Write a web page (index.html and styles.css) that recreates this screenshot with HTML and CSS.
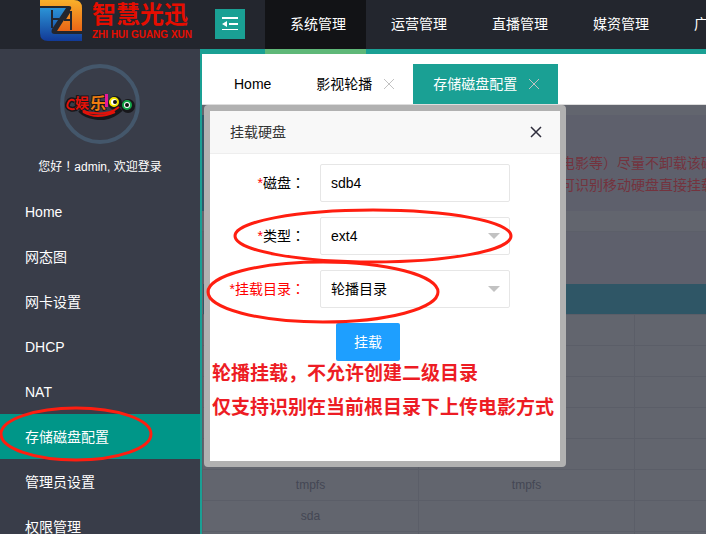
FILE: index.html
```
<!DOCTYPE html>
<html lang="zh-CN">
<head>
  <meta charset="UTF-8">
  <meta name="viewport" content="width=device-width, initial-scale=1.0">
  <title>存储磁盘配置</title>
  <link rel="stylesheet" href="styles.css">
</head>
<body>
  <header class="header">
    <a href="#" class="logo">
      <svg class="logo-mark" width="42" height="42" viewBox="0 0 42 42" aria-hidden="true">
        <defs>
          <linearGradient id="blue" x1="0" y1="0" x2="0" y2="1">
            <stop offset="0" stop-color="#2b93d6"/>
            <stop offset="1" stop-color="#123a97"/>
          </linearGradient>
          <linearGradient id="orange" x1="0" y1="0" x2="0" y2="1">
            <stop offset="0" stop-color="#f9b02a"/>
            <stop offset="1" stop-color="#ea6516"/>
          </linearGradient>
        </defs>
        <path fill="url(#blue)" d="M0 8H26L12 29q-2 5 3 5H42V41H8q-8 0-8-8z"/>
        <path fill="url(#orange)" d="M0 0H34q8 0 8 8V31H17L31 9q1-3-2-3H0z"/>
        <path fill="none" stroke="#23262e" stroke-width="2" d="M12 10V28M12 19H19M31 11V30M24 20H31M30 11L25 19"/>
      </svg>
      <span class="logo-text">
        <b>智慧光迅</b>
        <small>ZHI HUI GUANG XUN</small>
      </span>
    </a>
    <button class="fold" type="button" aria-label="收起菜单">
      <svg width="16" height="14" viewBox="0 0 16 14" aria-hidden="true">
        <path fill="#fff" d="M0 0H16V2H0zM7 6H16V8H7zM0 12H16V13H0zM0 7L5 4V10z"/>
      </svg>
    </button>
    <nav class="top-nav">
      <a href="#" class="active">系统管理</a>
      <a href="#">运营管理</a>
      <a href="#">直播管理</a>
      <a href="#">媒资管理</a>
      <a href="#">广告管理</a>
    </nav>
  </header>

  <div class="layout">
    <aside class="side">
      <div class="user">
        <div class="avatar">
          <svg width="70" height="32" viewBox="0 0 70 32" aria-hidden="true">
            <path fill="none" stroke="#17171b" stroke-width="5" d="M10 13q-5-3-7 2t3 6q4 1 7-3M15 22q6 6 15 7q14 3 26-8"/>
            <circle cx="50" cy="15" r="7" fill="#17171b"/>
            <circle cx="63" cy="18" r="7" fill="#17171b"/>
            <path fill="none" stroke="#e31209" stroke-width="2" d="M10 13q-5-3-7 2t3 6q4 1 7-3M14 20q6 5 15 5q15 2 25-6M18 24q14 8 32 0"/>
            <text class="yu" x="10" y="20">娱</text>
            <text class="le" x="25" y="21">乐</text>
            <rect x="40" y="6" width="3" height="13" fill="#e5189a"/>
            <circle cx="49" cy="14" r="4" fill="#fff" stroke="#f3e400" stroke-width="2"/>
            <circle cx="50" cy="14" r="2" fill="#111"/>
            <circle cx="62" cy="17" r="4" fill="#fff" stroke="#12a548" stroke-width="2"/>
            <circle cx="62" cy="17" r="2" fill="#111"/>
          </svg>
        </div>
        <p>您好<span lang="zh-TW">！</span>admin, 欢迎登录</p>
      </div>
      <nav class="side-nav">
        <a href="#">Home</a>
        <a href="#">网态图</a>
        <a href="#">网卡设置</a>
        <a href="#">DHCP</a>
        <a href="#">NAT</a>
        <a href="#" class="active">存储磁盘配置
          <svg class="mark mark-side" viewBox="0 0 156 56" aria-hidden="true"><ellipse cx="76" cy="28" rx="75" ry="26"/></svg>
        </a>
        <a href="#">管理员设置</a>
        <a href="#">权限管理</a>
      </nav>
    </aside>

    <main class="main">
      <div class="tabs">
        <a href="#" class="tab">Home</a>
        <a href="#" class="tab">影视轮播
          <svg width="10" height="10" viewBox="0 0 10 10" aria-hidden="true"><path d="M0 0L10 10M10 0L0 10"/></svg>
        </a>
        <a href="#" class="tab active">存储磁盘配置
          <svg width="10" height="10" viewBox="0 0 10 10" aria-hidden="true"><path d="M0 0L10 10M10 0L0 10"/></svg>
        </a>
      </div>

      <div class="page">
        <div class="notice">
          <p>电影等<span lang="zh-TW">）</span>尽量不卸载该磁盘</p>
          <p>可识别移动硬盘直接挂载</p>
        </div>
        <div class="toolbar"></div>
        <table class="disks">
          <thead>
            <tr><th></th><th></th><th></th></tr>
          </thead>
          <tbody>
            <tr><td></td><td></td><td></td></tr>
            <tr><td></td><td></td><td></td></tr>
            <tr><td></td><td></td><td></td></tr>
            <tr><td></td><td></td><td></td></tr>
            <tr><td></td><td></td><td></td></tr>
            <tr><td>tmpfs</td><td>tmpfs</td><td></td></tr>
            <tr><td>sda</td><td></td><td></td></tr>
            <tr><td></td><td></td><td></td></tr>
          </tbody>
        </table>
      </div>

      <section class="dialog" role="dialog" aria-labelledby="dialog-title">
        <div class="dialog-head">
          <h2 id="dialog-title">挂载硬盘</h2>
          <button type="button" aria-label="关闭">
            <svg width="12" height="12" viewBox="0 0 12 12" aria-hidden="true"><path d="M1 1L11 11M11 1L1 11"/></svg>
          </button>
        </div>
        <form class="dialog-body">
          <div class="field">
            <label for="disk"><i>*</i>磁盘<span lang="zh-TW">：</span></label>
            <input id="disk" type="text" value="sdb4">
          </div>
          <div class="field">
            <label for="type"><i>*</i>类型<span lang="zh-TW">：</span></label>
            <select id="type"><option>ext4</option></select>
            <svg class="mark mark-type" viewBox="0 0 280 58" aria-hidden="true"><ellipse cx="140" cy="29" rx="138" ry="26"/></svg>
          </div>
          <div class="field">
            <label for="dir" class="warn"><i>*</i>挂载目录<span lang="zh-TW">：</span></label>
            <select id="dir"><option>轮播目录</option></select>
            <svg class="mark mark-dir" viewBox="0 0 234 64" aria-hidden="true"><ellipse cx="117" cy="32" rx="115" ry="30"/></svg>
          </div>
          <button class="submit" type="button">挂载</button>
          <p class="tip">轮播挂载，不允许创建二级目录<br>仅支持识别在当前根目录下上传电影方式</p>
        </form>
      </section>
    </main>
  </div>
</body>
</html>
```
FILE: styles.css
```
* {
  box-sizing: border-box;
}

body {
  margin: 0;
  height: 100vh;
  display: flex;
  flex-direction: column;
  overflow: hidden;
  font: 14px/20px "Liberation Sans", "Noto Sans CJK SC", sans-serif;
  color: #000;
}

a {
  color: inherit;
  text-decoration: none;
}

p,
h2 {
  margin: 0;
}

button,
input,
select {
  font: inherit;
}

/* full-width punctuation centred in its cell */
[lang="zh-TW"] {
  font-family: "Noto Sans CJK TC", sans-serif;
  line-height: 1;
}

/* header */
.header {
  flex: none;
  display: flex;
  height: 49px;
  overflow-x: clip;
  background: #23262e;
  color: #fff;
}

.logo {
  flex: none;
  display: flex;
  width: 215px;
  padding-left: 40px;
  color: #e60d00;
}

.logo-text {
  margin-left: 10px;
  white-space: nowrap;
}

.logo-text b {
  display: block;
  font-size: 24px;
  line-height: 30px;
}

.logo-text small {
  display: block;
  font: bold 10px/10px "Liberation Sans", sans-serif;
}

.fold {
  flex: none;
  display: flex;
  align-items: center;
  justify-content: center;
  width: 30px;
  height: 30px;
  margin-top: 9px;
  padding: 0;
  border: 0;
  background: #1aa094;
}

.top-nav {
  display: flex;
  margin-left: 20px;
  white-space: nowrap;
}

.top-nav a {
  position: relative;
  padding: 0 25px;
  width: 101px;
  line-height: 49px;
}

.top-nav .active {
  background: #121316;
}

.top-nav .active::after {
  content: "";
  position: absolute;
  left: 0;
  top: 100%;
  z-index: 2;
  width: 100%;
  height: 5px;
  background: #5fb878;
}

/* sidebar */
.layout {
  flex: 1;
  display: flex;
  min-height: 0;
}

.side {
  flex: none;
  width: 200px;
  background: #393d49;
  color: #fff;
}

.user {
  padding: 15px 0 12px;
  font-size: 12px;
  text-align: center;
}

.avatar {
  display: flex;
  align-items: center;
  justify-content: center;
  width: 80px;
  height: 80px;
  margin: 0 auto 13px;
  border: 4px solid #44576b;
  border-radius: 50%;
}

.avatar svg {
  flex: none;
}

.avatar text {
  font-weight: bold;
  paint-order: stroke;
  stroke: #17171b;
  stroke-width: 2px;
}

.yu {
  font-size: 14px;
  fill: #e31209;
}

.le {
  font-size: 16px;
  fill: #f07d10;
}

.side-nav a {
  position: relative;
  display: block;
  height: 45px;
  padding-left: 25px;
  line-height: 46px;
}

.side-nav .active {
  background: #009688;
}

/* tabs */
.main {
  position: relative;
  flex: 1;
  display: flex;
  flex-direction: column;
  min-width: 0;
  border-top: 5px solid #1aa094;
  border-left: 2px solid #1aa094;
}

.tabs {
  flex: none;
  display: flex;
  padding: 10px 12px 0;
  border-bottom: 1px solid #ddd;
}

.tab {
  display: flex;
  align-items: center;
  gap: 12px;
  padding: 0 19px 0 20px;
  margin-right: 6px;
  line-height: 40px;
}

.tab svg {
  fill: none;
  stroke: #c2c2c2;
}

.tab.active {
  margin-left: -6px;
  background: #1aa094;
  color: #fff;
}

/* page under the dialog shade */
.page {
  flex: 1;
  min-height: 0;
  padding-top: 10px;
  overflow: hidden;
  background: #62656e;
  color: #444754;
}

.notice {
  padding: 37px 0 15px 354px;
  border-left: 5px solid #2f5769;
  background: #5e606c;
  color: #74333e;
  line-height: 22px;
  white-space: nowrap;
}

.toolbar {
  height: 53px;
  margin: 20px 0 0;
  border-top: 1px solid #5c5f69;
  background: #5e606c;
}

.disks {
  width: 649px;
  border-collapse: collapse;
  table-layout: fixed;
  font-size: 12px;
  text-align: center;
}

.disks th {
  height: 30px;
  padding: 0;
  background: #2f5666;
}

.disks td {
  height: 31px;
  padding: 0;
  border: 1px solid #5b5e68;
}

/* dialog */
.dialog {
  position: absolute;
  left: 2px;
  top: 51px;
  width: 362px;
  border: 6px solid #b1b1b1;
  border-radius: 4px;
  background: #fff;
}

.dialog-head {
  display: flex;
  align-items: center;
  justify-content: space-between;
  height: 43px;
  padding: 0 18px 0 20px;
  border-bottom: 1px solid #eee;
  background: #f8f8f8;
}

.dialog-head h2 {
  font-size: 14px;
  font-weight: normal;
  color: #333;
}

.dialog-head button {
  display: flex;
  padding: 0;
  border: 0;
  background: none;
}

.dialog-head path {
  fill: none;
  stroke: #2e2d3c;
  stroke-width: 1.5;
}

.dialog-body {
  padding: 10px 0 36px;
}

.field {
  position: relative;
  display: flex;
  align-items: center;
  margin-bottom: 15px;
}

.field label {
  width: 110px;
  padding-right: 15px;
  text-align: right;
  white-space: nowrap;
}

.field i {
  color: #f00;
  font-style: normal;
}

.field .warn {
  color: #f00;
}

.field input,
.field select {
  width: 190px;
  height: 38px;
  padding: 0 10px;
  border: 1px solid #e6e6e6;
  border-radius: 2px;
  background: #fff;
  color: #000;
}

.field select {
  appearance: none;
}

.field:has(select)::after {
  content: "";
  position: absolute;
  left: 278px;
  top: 16px;
  border: 6px solid transparent;
  border-top-color: #c2c2c2;
  border-bottom: 0;
}

.submit {
  display: block;
  height: 38px;
  margin-left: 126px;
  padding: 0 18px;
  border: 0;
  border-radius: 2px;
  background: #1e9fff;
  color: #fff;
}

.tip {
  margin-top: -4px;
  padding: 0 2px;
  color: #ed1c24;
  font-size: 19px;
  font-weight: bold;
  line-height: 34px;
  white-space: nowrap;
}

/* red rings lying over the page */
.mark {
  position: absolute;
  z-index: 3;
  overflow: visible;
  fill: none;
  stroke: #ff1e10;
  stroke-width: 3;
  pointer-events: none;
}

.mark-side {
  left: 0;
  top: -8px;
  width: 156px;
}

.mark-type {
  left: 23px;
  top: -10px;
  width: 280px;
}

.mark-dir {
  left: -4px;
  top: -10px;
  width: 234px;
}
```
